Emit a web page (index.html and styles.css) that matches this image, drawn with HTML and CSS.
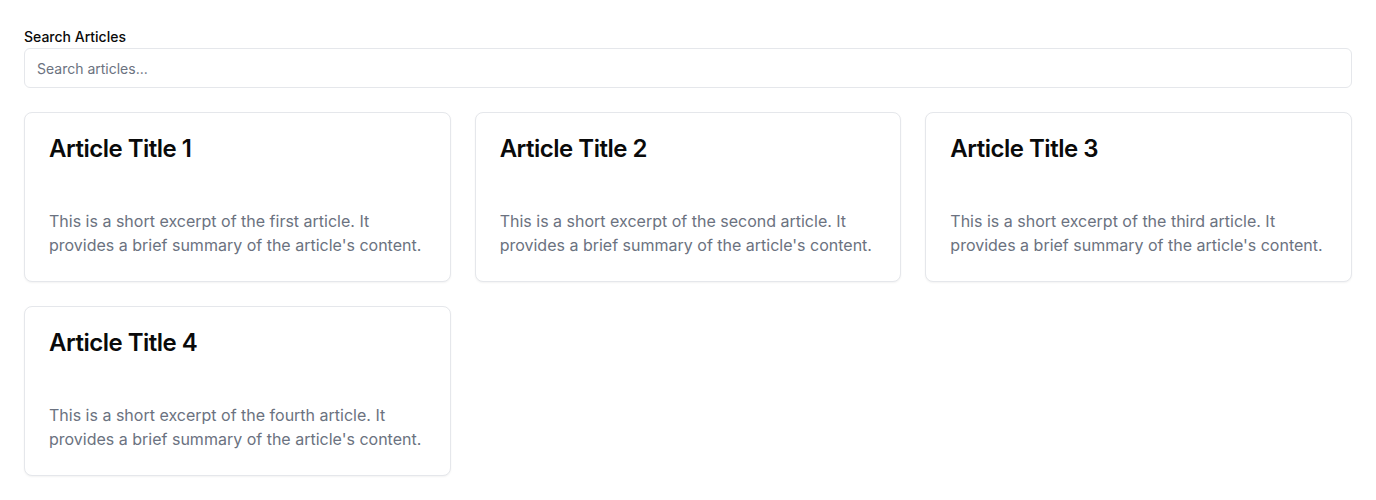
FILE: index.html
```
<!DOCTYPE html>
<html lang="en">
<head>
<meta charset="utf-8">
<title>Articles</title>
<link rel="stylesheet" href="styles.css">
</head>
<body>
<main class="page">
  <label class="search-label" for="search">Search Articles</label>
  <input class="search-input" id="search" type="text" placeholder="Search articles...">
  <div class="grid">
    <article class="card">
      <h2 class="card-title">Article Title 1</h2>
      <p class="card-excerpt">This is a short excerpt of the first article. It provides a brief summary of the article's content.</p>
    </article>
    <article class="card">
      <h2 class="card-title">Article Title 2</h2>
      <p class="card-excerpt">This is a short excerpt of the second article. It provides a brief summary of the article's content.</p>
    </article>
    <article class="card">
      <h2 class="card-title">Article Title 3</h2>
      <p class="card-excerpt">This is a short excerpt of the third article. It provides a brief summary of the article's content.</p>
    </article>
    <article class="card">
      <h2 class="card-title">Article Title 4</h2>
      <p class="card-excerpt">This is a short excerpt of the fourth article. It provides a brief summary of the article's content.</p>
    </article>
  </div>
</main>
</body>
</html>
```
FILE: styles.css
```
* { box-sizing: border-box; }
html, body { margin: 0; background: #ffffff; }
body {
  font-family: Inter, "Noto Sans", sans-serif;
  color: #0a0a0a;
}
.page {
  padding: 24px;
  display: flex;
  flex-direction: column;
}
.search-label {
  font-size: 14px;
  line-height: 20px;
  padding-top: 3px;
  margin-bottom: 1px;
  font-weight: 500;
  color: #0a0a0a;
}
.search-input {
  height: 40px;
  width: 100%;
  border: 1px solid #e5e7eb;
  border-radius: 6px;
  padding: 0 12px;
  font-family: inherit;
  font-size: 14px;
  color: #0a0a0a;
  background: #fff;
  outline: none;
}
.search-input::placeholder { color: #6b7280; }
.grid {
  margin-top: 24px;
  display: grid;
  grid-template-columns: repeat(3, 1fr);
  gap: 24px;
}
.card {
  border: 1px solid #e5e7eb;
  border-radius: 8px;
  background: #fff;
  box-shadow: 0 1px 2px rgba(0,0,0,0.05);
  padding: 24px;
}
.card-title {
  margin: 0;
  font-size: 24px;
  line-height: 24px;
  font-weight: 600;
  letter-spacing: -0.5px;
  color: #0a0a0a;
}
.card-excerpt {
  margin: 48px 0 0;
  font-size: 16px;
  line-height: 24px;
  color: #6b7280;
}
```
